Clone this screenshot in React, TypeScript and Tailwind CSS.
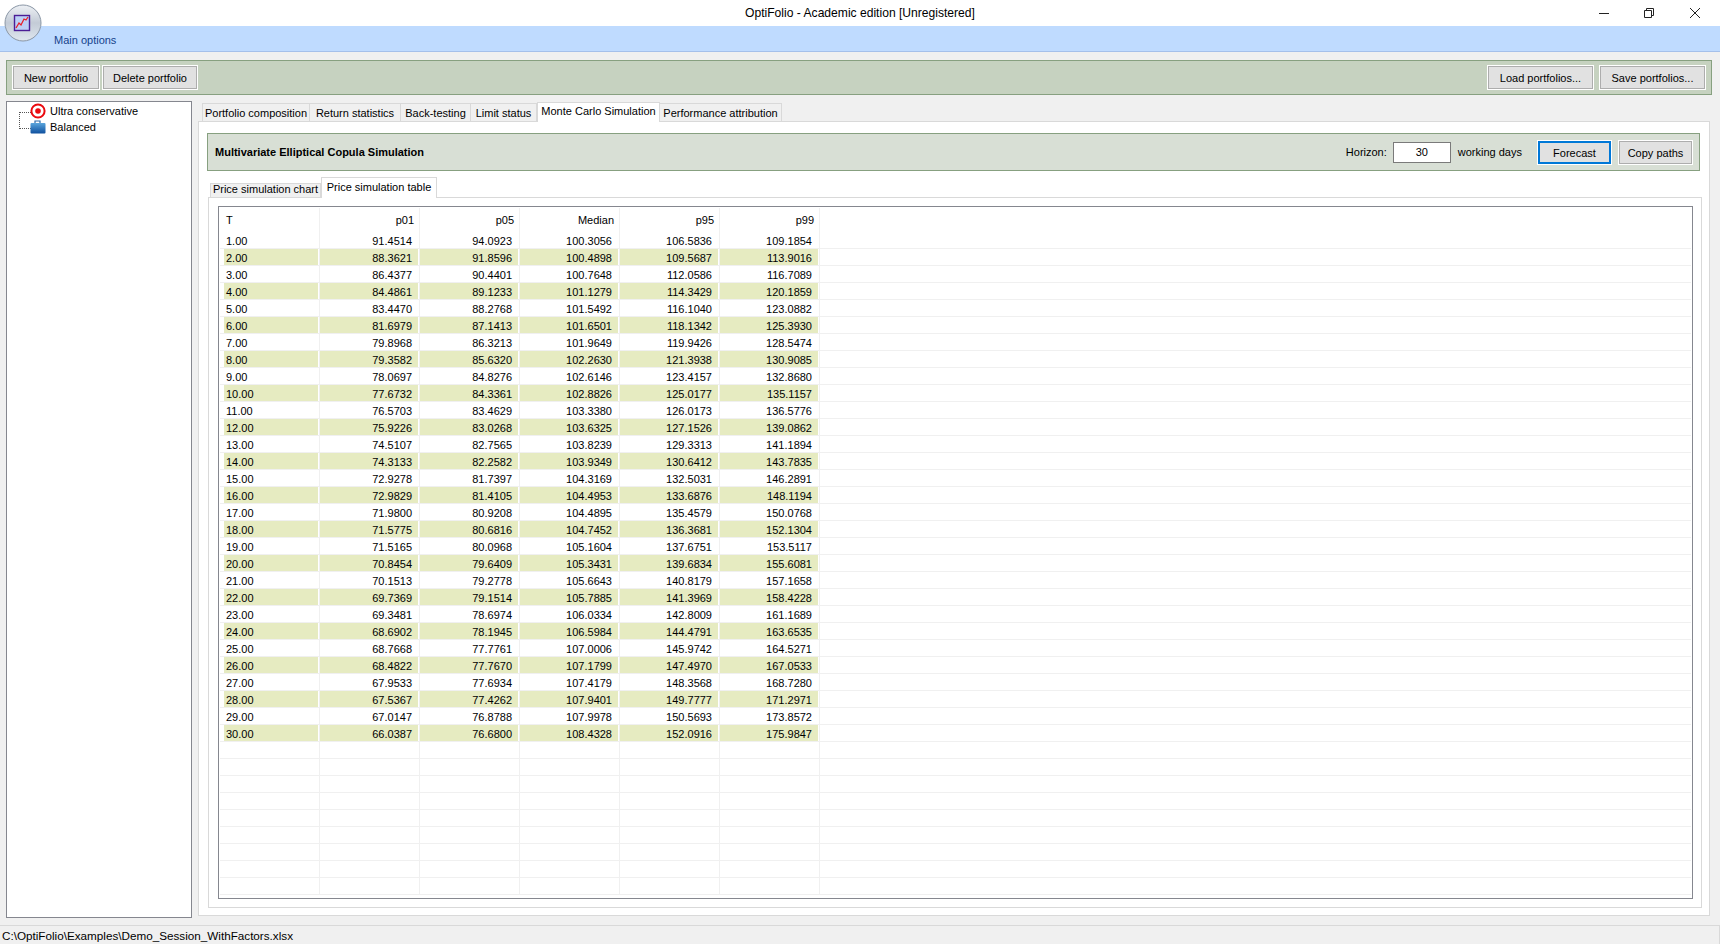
const columns = ["p01", "p05", "Median", "p95", "p99"]

const rows = [
  ["1.00", "91.4514", "94.0923", "100.3056", "106.5836", "109.1854"],
  ["2.00", "88.3621", "91.8596", "100.4898", "109.5687", "113.9016"],
  ["3.00", "86.4377", "90.4401", "100.7648", "112.0586", "116.7089"],
  ["4.00", "84.4861", "89.1233", "101.1279", "114.3429", "120.1859"],
  ["5.00", "83.4470", "88.2768", "101.5492", "116.1040", "123.0882"],
  ["6.00", "81.6979", "87.1413", "101.6501", "118.1342", "125.3930"],
  ["7.00", "79.8968", "86.3213", "101.9649", "119.9426", "128.5474"],
  ["8.00", "79.3582", "85.6320", "102.2630", "121.3938", "130.9085"],
  ["9.00", "78.0697", "84.8276", "102.6146", "123.4157", "132.8680"],
  ["10.00", "77.6732", "84.3361", "102.8826", "125.0177", "135.1157"],
  ["11.00", "76.5703", "83.4629", "103.3380", "126.0173", "136.5776"],
  ["12.00", "75.9226", "83.0268", "103.6325", "127.1526", "139.0862"],
  ["13.00", "74.5107", "82.7565", "103.8239", "129.3313", "141.1894"],
  ["14.00", "74.3133", "82.2582", "103.9349", "130.6412", "143.7835"],
  ["15.00", "72.9278", "81.7397", "104.3169", "132.5031", "146.2891"],
  ["16.00", "72.9829", "81.4105", "104.4953", "133.6876", "148.1194"],
  ["17.00", "71.9800", "80.9208", "104.4895", "135.4579", "150.0768"],
  ["18.00", "71.5775", "80.6816", "104.7452", "136.3681", "152.1304"],
  ["19.00", "71.5165", "80.0968", "105.1604", "137.6751", "153.5117"],
  ["20.00", "70.8454", "79.6409", "105.3431", "139.6834", "155.6081"],
  ["21.00", "70.1513", "79.2778", "105.6643", "140.8179", "157.1658"],
  ["22.00", "69.7369", "79.1514", "105.7885", "141.3969", "158.4228"],
  ["23.00", "69.3481", "78.6974", "106.0334", "142.8009", "161.1689"],
  ["24.00", "68.6902", "78.1945", "106.5984", "144.4791", "163.6535"],
  ["25.00", "68.7668", "77.7761", "107.0006", "145.9742", "164.5271"],
  ["26.00", "68.4822", "77.7670", "107.1799", "147.4970", "167.0533"],
  ["27.00", "67.9533", "77.6934", "107.4179", "148.3568", "168.7280"],
  ["28.00", "67.5367", "77.4262", "107.9401", "149.7777", "171.2971"],
  ["29.00", "67.0147", "76.8788", "107.9978", "150.5693", "173.8572"],
  ["30.00", "66.0387", "76.6800", "108.4328", "152.0916", "175.9847"],
]

const mainTabs = [
  { label: "Portfolio composition", width: "w-[108px]" },
  { label: "Return statistics", width: "w-[91px]" },
  { label: "Back-testing", width: "w-[70px]" },
  { label: "Limit status", width: "w-[66px]" },
  { label: "Monte Carlo Simulation", width: "w-[123px]", active: true },
  { label: "Performance attribution", width: "w-[122px]" },
]

function WinButton({ label, width, primary }: any) {
  return (
    <button className={`${width} h-[25px] border border-white bg-[#e1e1e1] flex items-center justify-center pt-[2px] ${primary ? "shadow-[inset_0_0_0_2px_#0078d7]" : "shadow-[inset_0_0_0_1px_#adadad]"}`}>
      {label}
    </button>
  )
}

function TabButton({ label, width, active }: any) {
  return active ? (
    <div className={`${width} mt-px h-5 bg-white border border-b-0 border-[#d9d9d9] flex items-center justify-center pb-[3px]`}>{label}</div>
  ) : (
    <div className={`${width} mt-[2px] h-[19px] bg-[#f0f0f0] border border-[#d9d9d9] border-l-0 first:border-l flex items-center justify-center pt-[2px]`}>{label}</div>
  )
}

function AppLogo() {
  return (
    <svg width="38" height="38" viewBox="0 0 38 38">
      <defs>
        <linearGradient id="orb" x1="0" y1="0" x2="0" y2="1">
          <stop offset="0" stopColor="#eef1f5" />
          <stop offset="0.5" stopColor="#c3cbd6" />
          <stop offset="1" stopColor="#dfe6ef" />
        </linearGradient>
      </defs>
      <circle cx="19" cy="19" r="18" fill="url(#orb)" stroke="#8b97a6" strokeWidth="1" />
      <rect x="10.5" y="11.5" width="15" height="15" fill="#bcd0f6" stroke="#4b1d96" strokeWidth="1.4" />
      <path d="M12 24 L15 19 L17 21 L20 15 L22 16 L24 13" fill="none" stroke="#e8202a" strokeWidth="1.3" />
    </svg>
  )
}

function TargetIcon() {
  return (
    <svg width="16" height="16" viewBox="0 0 16 16">
      <circle cx="8" cy="8" r="6.6" fill="#fff" stroke="#ea0a0f" strokeWidth="2" />
      <circle cx="8" cy="8" r="2.8" fill="#ea0a0f" />
    </svg>
  )
}

function CaseIcon() {
  return (
    <svg width="16" height="14" viewBox="0 0 16 14">
      <defs>
        <linearGradient id="case" x1="0" y1="0" x2="0" y2="1">
          <stop offset="0" stopColor="#5aa5dc" />
          <stop offset="1" stopColor="#0e4f9e" />
        </linearGradient>
      </defs>
      <path d="M5 3 V1 H10 V3" fill="none" stroke="#2d6cab" strokeWidth="1.2" />
      <rect x="0.5" y="3" width="15" height="10.5" rx="1" fill="url(#case)" />
    </svg>
  )
}

function TreePanel() {
  return (
    <div className="w-[186px] h-[817px] bg-white border border-[#85878f] pt-px">
      <div className="flex h-8">
        <div className="w-[12px] ml-[12px] mt-[9px] h-[17px] border-l border-t border-b border-dotted border-[#555]"></div>
        <div className="flex flex-col">
          <div className="flex items-center h-4 gap-[4px]">
            <div className="flex justify-center w-[16px] ml-[-1px]"><TargetIcon /></div>
            <span>Ultra conservative</span>
          </div>
          <div className="flex items-center h-4 gap-[4px]">
            <div className="flex justify-center w-[16px] ml-[-1px]"><CaseIcon /></div>
            <span>Balanced</span>
          </div>
        </div>
      </div>
    </div>
  )
}

function TableHeader() {
  return (
    <div className="flex h-[25px] pt-px">
      <div className="w-[101px] border-r border-[#f0f0f0] pl-[7px] flex items-center">T</div>
      {columns.map((c) => (
        <div key={c} className="w-[100px] border-r border-[#f0f0f0] pr-[5px] flex items-center justify-end">{c}</div>
      ))}
    </div>
  )
}

function TableRow({ cells, shaded }: any) {
  const bg = shaded ? "bg-[#e6ebc1]" : ""
  return (
    <div className="flex h-[17px] pl-px pr-px">
      <div className="w-[100px] h-full border-r border-b border-[#f0f0f0]">
        <div className={`ml-[4px] mr-px h-4 pl-[2px] pt-[2px] flex items-center ${bg}`}>{cells[0]}</div>
      </div>
      {cells.slice(1).map((v: string, i: number) => (
        <div key={i} className="w-[100px] h-full border-r border-b border-[#f0f0f0]">
          <div className={`mr-px h-4 pr-[6px] pt-[2px] flex items-center justify-end ${bg}`}>{v}</div>
        </div>
      ))}
      <div className="flex-1 border-b border-[#f0f0f0]"></div>
    </div>
  )
}

function SimulationTable() {
  const blanks = Array.from({ length: 9 }, () => ["", "", "", "", "", ""])
  return (
    <div className="ml-[9px] mt-2 w-[1475px] h-[693px] bg-white border border-[#85878f] overflow-hidden">
      <TableHeader />
      {rows.map((r, i) => <TableRow key={r[0]} cells={r} shaded={i % 2 === 1} />)}
      {blanks.map((r, i) => <TableRow key={i} cells={r} />)}
    </div>
  )
}

export default function App() {
  return (
    <div className="relative w-[1720px] h-[944px] overflow-hidden bg-[#f0f0f0] text-[11px] leading-none text-black font-['Liberation_Sans',sans-serif]">
      <div className="h-[26px] bg-white grid grid-cols-[1fr_auto_1fr] items-center">
        <div></div>
        <div className="text-[12.1px]">OptiFolio - Academic edition [Unregistered]</div>
        <div className="flex justify-end items-center pr-5">
          <svg width="10" height="10" viewBox="0 0 10 10" className="mr-[35px]"><path d="M0 5.5 H10" stroke="#222" /></svg>
          <svg width="10" height="10" viewBox="0 0 10 10" className="mr-9"><path d="M0.5 2.5 H7.5 V9.5 H0.5 Z M2.5 2.5 V0.5 H9.5 V7.5 H7.5" fill="none" stroke="#222" /></svg>
          <svg width="10" height="10" viewBox="0 0 10 10"><path d="M0 0 L10 10 M10 0 L0 10" stroke="#222" /></svg>
        </div>
      </div>
      <div className="h-[26px] bg-[#bfdbff] border-b border-[#a5c0ea] pl-[54px] pt-[3px] flex items-center text-[#15428b]">Main options</div>
      <div className="absolute left-[4px] top-[4px]"><AppLogo /></div>

      <div className="ml-[6px] mt-2 w-[1706px] h-[35px] bg-[#c6d2c0] border border-[#87a080] px-[5px] pt-1 flex gap-[2px]">
        <WinButton label="New portfolio" width="w-[88px]" />
        <WinButton label="Delete portfolio" width="w-[96px]" />
        <div className="flex-1"></div>
        <WinButton label="Load portfolios..." width="w-[107px]" />
        <div className="w-px"></div>
        <WinButton label="Save portfolios..." width="w-[107px]" />
      </div>

      <div className="flex mt-[6px] ml-[6px] gap-[6px]">
        <TreePanel />
        <div className="w-[1512px]">
          <div className="relative z-10 flex h-[21px] pl-[4px]">
            {mainTabs.map((t) => <TabButton key={t.label} {...t} />)}
          </div>
          <div className="-mt-px h-[795px] bg-white border border-[#d9d9d9]">
            <div className="ml-2 mt-[11px] w-[1493px] h-[38px] bg-[#d8dfd5] border border-[#87a080] flex items-center pl-[7px]">
              <span className="font-bold">Multivariate Elliptical Copula Simulation</span>
              <div className="flex-1"></div>
              <span className="mr-[6px]">Horizon:</span>
              <div className="w-[58px] h-[21px] bg-white border border-[#7a7a7a] flex items-center justify-center">30</div>
              <span className="ml-[7px] mr-[15px]">working days</span>
              <WinButton label="Forecast" width="w-[75px]" primary />
              <div className="w-[6px]"></div>
              <WinButton label="Copy paths" width="w-[75px]" />
              <div className="w-[6px]"></div>
            </div>
            <div className="relative z-10 flex h-[21px] pl-[3px] mt-[6px] ml-2">
              <div className="w-[111px] mt-[6px] h-[15px] bg-[#f0f0f0] border border-[#d9d9d9] flex items-center justify-center pb-[2px]">Price simulation chart</div>
              <div className="w-[116px] h-[21px] bg-white border border-b-0 border-[#d9d9d9] flex items-center justify-center pb-[2px]">Price simulation table</div>
            </div>
            <div className="-mt-px ml-[9px] w-[1494px] h-[711px] bg-white border border-[#d9d9d9]">
              <SimulationTable />
            </div>
          </div>
        </div>
      </div>

      <div className="mt-[7px] h-[19px] border-t border-r border-[#d9d9d9] pl-[2px] pt-px flex items-center text-[11.7px]">C:\OptiFolio\Examples\Demo_Session_WithFactors.xlsx</div>
    </div>
  )
}
